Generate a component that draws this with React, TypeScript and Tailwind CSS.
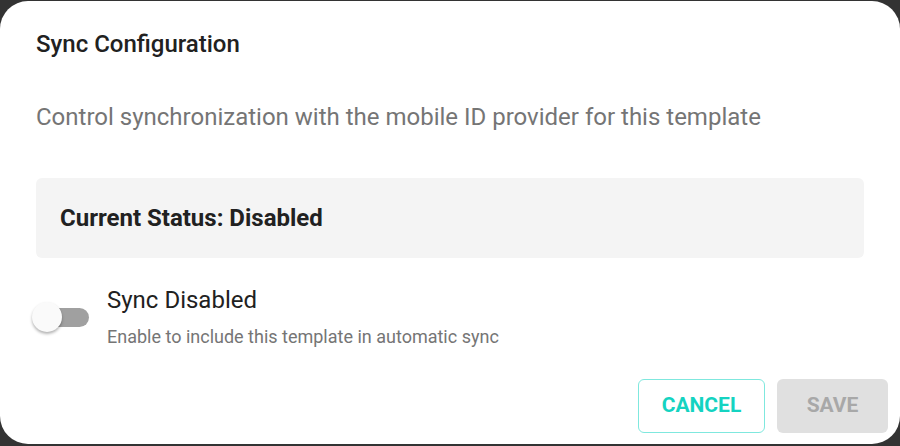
export default function App() {
  return (
    <div className="h-[446px] w-[900px] overflow-hidden bg-[#333333] pt-px font-['Roboto',sans-serif]">
      <div className="flex h-[443px] w-[900px] flex-col rounded-[28px] bg-white px-9">
        <h2 className="mt-[27px] text-[24px] font-medium leading-[32px] text-[#212121]">Sync Configuration</h2>
        <p className="mt-[41px] text-[24px] leading-[32px] text-[#757575]">
          Control synchronization with the mobile ID provider for this template
        </p>
        <div className="mt-[45px] flex h-[80px] items-center rounded-md bg-[#f4f4f4] px-6">
          <span className="text-[24px] font-bold text-[#212121]">Current Status: Disabled</span>
        </div>
        <div className="mt-[26px] flex items-start gap-[18px]">
          <div className="relative mt-[18px] h-[30px] w-[53px]">
            <div className="absolute left-[1px] top-[6px] h-[19px] w-[52px] rounded-full bg-[#a0a0a0]" />
            <div className="absolute left-[-4px] top-0 h-[30px] w-[30px] rounded-full bg-[#fafafa] shadow-[0_2px_3px_rgba(0,0,0,0.3)]" />
          </div>
          <div className="flex flex-col">
            <span className="text-[24px] leading-[32px] text-[#212121]">Sync Disabled</span>
            <span className="mt-[9px] text-[18px] leading-[24px] text-[#757575]">
              Enable to include this template in automatic sync
            </span>
          </div>
        </div>
        <div className="mt-auto mb-[11px] -mr-[24px] flex justify-end gap-3">
          <button className="h-[54px] w-[127px] rounded-md border border-[#7fe8de] text-[21px] font-bold text-[#14d3c1]">
            CANCEL
          </button>
          <button className="h-[54px] w-[111px] rounded-md bg-[#e0e0e0] text-[21px] font-bold text-[#a8a8a8]">
            SAVE
          </button>
        </div>
      </div>
    </div>
  )
}
